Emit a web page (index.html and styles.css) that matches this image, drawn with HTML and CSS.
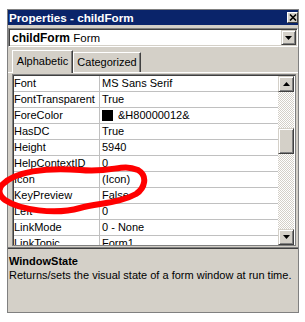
FILE: index.html
```html
<!DOCTYPE html>
<html lang="en">
<head>
    <meta charset="UTF-8">
    <title>Properties - childForm</title>
    <link rel="stylesheet" href="styles.css">
</head>
<body>
    <div class="window">
        <div class="titlebar">
            <span>Properties - childForm</span>
            <div class="close">
                <svg width="8" height="7" viewBox="0 0 8 7"><path d="M1 0.5 L7 6.5 M7 0.5 L1 6.5" stroke="#000" stroke-width="1.6" fill="none"/></svg>
            </div>
        </div>

        <div class="combo">
            <div class="combo-text"><b>childForm</b> Form</div>
            <div class="btn3d combo-btn">
                <svg width="7" height="4" viewBox="0 0 7 4"><polygon points="0,0 7,0 3.5,4" fill="#000"/></svg>
            </div>
        </div>

        <div class="tabs">
            <div class="tab active">Alphabetic</div>
            <div class="tab">Categorized</div>
        </div>

        <div class="panel">
            <div class="grid">
                <div class="rows">
                    <div class="row"><div class="name">Font</div><div class="value">MS Sans Serif</div></div>
                    <div class="row"><div class="name">FontTransparent</div><div class="value">True</div></div>
                    <div class="row"><div class="name">ForeColor</div><div class="value"><span class="swatch"></span>&amp;H80000012&amp;</div></div>
                    <div class="row"><div class="name">HasDC</div><div class="value">True</div></div>
                    <div class="row"><div class="name">Height</div><div class="value">5940</div></div>
                    <div class="row"><div class="name">HelpContextID</div><div class="value">0</div></div>
                    <div class="row"><div class="name">Icon</div><div class="value">(Icon)</div></div>
                    <div class="row"><div class="name">KeyPreview</div><div class="value">False</div></div>
                    <div class="row"><div class="name">Left</div><div class="value">0</div></div>
                    <div class="row"><div class="name">LinkMode</div><div class="value">0 - None</div></div>
                    <div class="row"><div class="name">LinkTopic</div><div class="value">Form1</div></div>
                </div>
                <div class="scrollbar">
                    <div class="btn3d sb-btn">
                        <svg width="7" height="4" viewBox="0 0 7 4"><polygon points="0,4 7,4 3.5,0" fill="#000"/></svg>
                    </div>
                    <div class="btn3d thumb"></div>
                    <div class="btn3d sb-btn sb-down">
                        <svg width="7" height="4" viewBox="0 0 7 4"><polygon points="0,0 7,0 3.5,4" fill="#000"/></svg>
                    </div>
                </div>
            </div>
        </div>

        <div class="desc">
            <div class="desc-title">WindowState</div>
            <div>Returns/sets the visual state of a form window at run time.</div>
        </div>
    </div>

    <!-- hand drawn red circle around the Icon row -->
    <svg class="scribble" width="305" height="322" viewBox="0 0 305 322">
        <path d="M3 184 C15 172, 45 167, 80 170 S120 163, 138 170 C148 176, 145 188, 136 194 C120 203, 100 203, 80 208 C55 215, 20 210, 5 200 C-2 195, -2 188, 3 184" stroke="#f00" stroke-width="6" fill="none" stroke-linecap="round"/>
    </svg>
</body>
</html>
```

FILE: styles.css
```css
body {
    margin: 0;
    background: #fff;
    font-family: "Liberation Sans", Arial, sans-serif;
    font-size: 11px;
    color: #000;
}

.window {
    width: 292px;
    height: 304px;
    margin: 9px 0 0 7px;
    box-sizing: border-box;
    border: 1px solid #808080;
    background: #d4d0c8;
    display: flex;
    flex-direction: column;
}

.titlebar {
    height: 15px;
    flex-shrink: 0;
    background: #0a246a;
    color: #fff;
    font-weight: bold;
    font-size: 11.7px;
    display: flex;
    align-items: center;
    justify-content: space-between;
    padding-left: 1px;
}

.close {
    width: 11px;
    height: 11px;
    box-sizing: border-box;
    background: #d4d0c8;
    border: 1px solid;
    border-color: #fff #404040 #404040 #fff;
    display: flex;
    align-items: center;
    justify-content: center;
}

/* raised 3d button look */
.btn3d {
    box-sizing: border-box;
    background: #d4d0c8;
    border: 1px solid;
    border-color: #d4d0c8 #404040 #404040 #d4d0c8;
    box-shadow: inset 1px 1px #fff, inset -1px -1px #808080;
    display: flex;
    align-items: center;
    justify-content: center;
}

.combo {
    margin-top: 3px;
    height: 19px;
    flex-shrink: 0;
    box-sizing: border-box;
    background: #fff;
    border: 1px solid;
    border-color: #808080 #fff #fff #808080;
    box-shadow: inset 1px 1px #404040, inset -1px -1px #d4d0c8;
    display: flex;
    align-items: center;
    padding: 0 1px 0 3px;
}

.combo-text {
    flex: 1;
    font-size: 11.5px;
}

.combo-text b {
    font-size: 12px;
}

.combo-btn {
    width: 15px;
    height: 15px;
}

.tabs {
    height: 25px;
    flex-shrink: 0;
    display: flex;
    align-items: flex-end;
    padding-left: 4px;
}

.tab {
    height: 20px;
    box-sizing: border-box;
    border: 1px solid;
    border-bottom: none;
    border-color: #fff #404040 #fff #fff;
    box-shadow: inset -1px 0 #808080;
    line-height: 18px;
    text-align: center;
    width: 68px;
}

.tab.active {
    height: 23px;
    width: 61px;
    margin-bottom: -1px;
    position: relative;
    background: #d4d0c8;
    line-height: 20px;
}

.panel {
    border-top: 1px solid #fff;
    padding: 1px 2px 0 4px;
}

.grid {
    height: 172px;
    box-sizing: border-box;
    border: 1px solid #808080;
    box-shadow: inset 1px 1px #404040;
    background: #fff;
    display: flex;
    padding: 1px 0 0 1px;
}

.rows {
    width: 264px;
    overflow: hidden;
}

.row {
    display: flex;
    height: 16px;
    box-sizing: border-box;
    border-bottom: 1px solid #c0c0c0;
    line-height: 15px;
    white-space: nowrap;
}

.name {
    width: 86px;
    flex-shrink: 0;
    box-sizing: border-box;
    border-right: 1px solid #c0c0c0;
    overflow: hidden;
}

.value {
    padding-left: 2px;
    display: flex;
    align-items: center;
}

.swatch {
    width: 11px;
    height: 11px;
    background: #000;
    margin-right: 5px;
}

.scrollbar {
    width: 16px;
    display: flex;
    flex-direction: column;
    background: repeating-conic-gradient(#fff 0 25%, #d4d0c8 0 50%) 0 0 / 2px 2px;
}

.sb-btn {
    height: 16px;
}

.thumb {
    margin-top: 36px;
    height: 26px;
}

.sb-down {
    margin-top: auto;
}

.desc {
    flex: 1;
    margin-top: 1px;
    border-top: 1px solid #808080;
    box-shadow: inset 0 1px #404040;
    padding: 6px 0 0 1px;
    line-height: 14px;
}

.desc-title {
    font-weight: bold;
}

.scribble {
    position: absolute;
    left: 0;
    top: 0;
    pointer-events: none;
}
```
